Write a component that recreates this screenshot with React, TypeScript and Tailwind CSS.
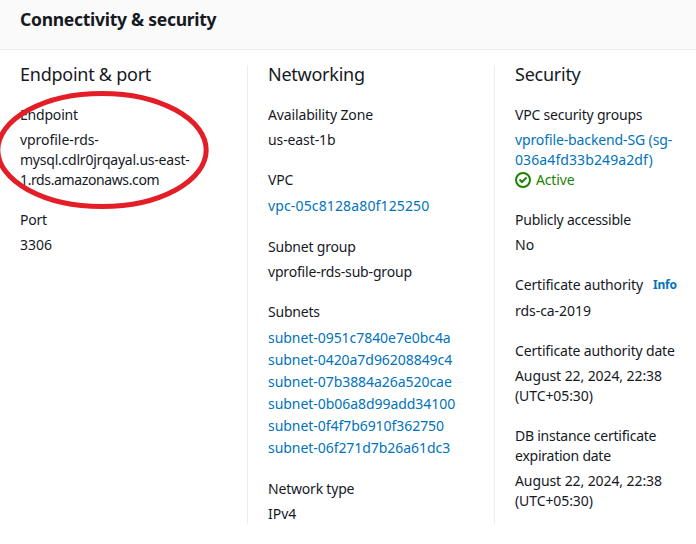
import type { ReactNode } from "react";

type FieldProps = { label: ReactNode; children: ReactNode };

function Field({ label, children }: FieldProps) {
  return (
    <div>
      <dt className="mb-[5px] tracking-[-0.2px]">{label}</dt>
      <dd>{children}</dd>
    </div>
  );
}

type ColumnProps = { title: string; className: string; children: ReactNode };

function Column({ title, className, children }: ColumnProps) {
  return (
    <section className={`h-[459px] whitespace-nowrap pl-5 ${className}`}>
      <h3 className="-mt-px mb-[21px] text-[18px] leading-5 tracking-[-0.25px]">{title}</h3>
      <dl className="flex flex-col gap-5">{children}</dl>
    </section>
  );
}

const subnets = [
  "subnet-0951c7840e7e0bc4a",
  "subnet-0420a7d96208849c4",
  "subnet-07b3884a26a520cae",
  "subnet-0b06a8d99add34100",
  "subnet-0f4f7b6910f362750",
  "subnet-06f271d7b26a61dc3",
];

export default function App() {
  return (
    <div className="relative h-[544px] w-[696px] overflow-hidden bg-white font-['Noto_Sans',sans-serif] text-[14px] leading-5 text-[#16191f]">
      <header className="h-[50px] border-b border-[#eaeded] bg-[#fafafa] px-5 pt-[9px]">
        <h2 className="text-[17.5px] leading-5 font-bold tracking-[-0.27px]">Connectivity &amp; security</h2>
      </header>
      <main className="flex items-start pt-[15px]">
        <Column title="Endpoint & port" className="w-[247px]">
          <Field label="Endpoint">
            <div className="tracking-[-0.05px]">vprofile-rds-</div>
            <div className="tracking-[-0.22px]">mysql.cdlr0jrqayal.us-east-</div>
            <div className="tracking-[-0.38px]">1.rds.amazonaws.com</div>
          </Field>
          <Field label="Port">3306</Field>
        </Column>
        <Column title="Networking" className="w-[247px] border-l border-[#eaeded]">
          <Field label={<span className="tracking-[-0.14px]">Availability Zone</span>}>
            <span className="tracking-[-0.1px]">us-east-1b</span>
          </Field>
          <Field label="VPC">
            <a className="block leading-[22px] tracking-[0.14px] text-[#0073bb]">vpc-05c8128a80f125250</a>
          </Field>
          <Field label="Subnet group">
            <span className="tracking-[-0.18px]">vprofile-rds-sub-group</span>
          </Field>
          <Field label="Subnets">
            <ul className="leading-[22px] tracking-[-0.05px] text-[#0073bb]">
              {subnets.map((s) => <li key={s}>{s}</li>)}
            </ul>
          </Field>
          <Field label="Network type">IPv4</Field>
        </Column>
        <Column title="Security" className="w-[202px] border-l border-[#eaeded]">
          <Field label="VPC security groups">
            <a className="text-[#0073bb]">
              <span className="tracking-[-0.12px]">vprofile-backend-SG (sg-</span><br />
              <span className="tracking-[0.1px]">036a4fd33b249a2df)</span>
            </a>
            <div className="flex items-center gap-[5px] text-[#1d8102]">
              <svg width="16" height="16" viewBox="0 0 16 16" fill="none" stroke="currentColor" strokeWidth="2">
                <circle cx="8" cy="8" r="7" />
                <path d="m4.5 7.500 2.500 2.500 4.500-4.500" />
              </svg>
              <span className="tracking-[-0.15px]">Active</span>
            </div>
          </Field>
          <Field label={<span className="tracking-[-0.24px]">Publicly accessible</span>}>No</Field>
          <Field
            label={
              <span className="flex h-[21px] tracking-[-0.15px]">
                Certificate authority
                <a className="ml-[10px] text-[12px] font-bold text-[#0073bb]">Info</a>
              </span>
            }
          >
            <span className="tracking-[-0.05px]">rds-ca-2019</span>
          </Field>
          <Field label={<span className="tracking-[-0.17px]">Certificate authority date</span>}>
            <span className="tracking-[-0.09px]">August 22, 2024, 22:38<br />(UTC+05:30)</span>
          </Field>
          <Field label={<span className="tracking-[-0.24px]">DB instance certificate<br />expiration date</span>}>
            <span className="tracking-[-0.09px]">August 22, 2024, 22:38<br />(UTC+05:30)</span>
          </Field>
        </Column>
      </main>
      {/* Annotation drawn over the endpoint */}
      <svg className="absolute top-0 left-0" width="260" height="230" fill="none" stroke="#e31e26" strokeWidth="5">
        <ellipse cx="102" cy="150" rx="104.200" ry="56.500" />
      </svg>
    </div>
  );
}
